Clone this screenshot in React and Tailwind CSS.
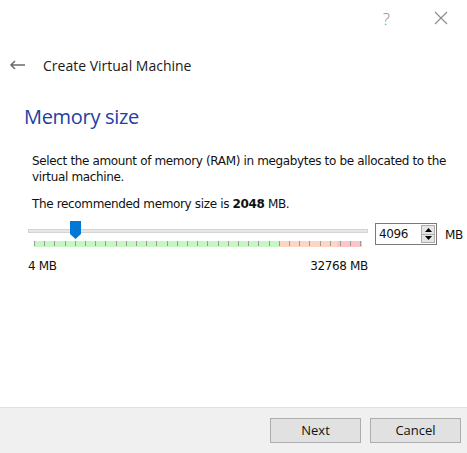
import React from "react";

// tick positions for the slider scale
const ticks = Array.from({ length: 33 }, (_, i) => i);

export default function App() {
    return (
        <div className="w-[467px] h-[453px] bg-white flex flex-col font-['Open_Sans',sans-serif] text-black overflow-hidden">
            {/* title bar */}
            <div className="h-[36px] flex items-start justify-end pt-[9px] pr-[19px] gap-[44px] text-[#8a8a8a]">
                <span className="text-[17px] leading-[20px] font-light">?</span>
                <svg width="14" height="14" viewBox="0 0 14 14" className="mt-[2px]">
                    <path d="M1 1L13 13M13 1L1 13" stroke="#8a8a8a" strokeWidth="1.1" />
                </svg>
            </div>

            {/* header */}
            <div className="h-[58px] flex items-center pl-[9px]">
                <svg width="17" height="10" viewBox="0 0 17 10">
                    <path d="M16 5H2M6 1L2 5L6 9" stroke="#6a6a6a" strokeWidth="1.5" fill="none" />
                </svg>
                <span className="ml-[17px] text-[14px] text-[#1a1a1a] pt-[1px]">Create Virtual Machine</span>
            </div>

            {/* page title */}
            <div className="pl-[24px] pt-[9px] h-[49px] text-[20px] font-normal text-[#2041a3] leading-[28px] tracking-[-0.3px]">Memory size</div>

            {/* description */}
            <div className="mt-[10px] pl-[32px] pr-[10px] font-['DejaVu_Sans',sans-serif] text-[12px] leading-[16px] tracking-[-0.35px] text-[#111]">
                <p>Select the amount of memory (RAM) in megabytes to be allocated to the virtual machine.</p>
                <p className="mt-[11px]">
                    The recommended memory size is <b>2048</b> MB.
                </p>
            </div>

            {/* slider row */}
            <div className="flex items-start mt-[9px] pl-[28px]">
                <div className="w-[340px] flex flex-col">
                    <div className="relative h-[18px]">
                        <div className="absolute left-0 right-0 top-[8px] h-[4px] bg-[#e7e7e7] border border-[#d4d4d4]" />
                        <svg width="11" height="18" viewBox="0 0 11 18" className="absolute left-[42px] top-0">
                            <path d="M0 0H11V13L5.5 18L0 13Z" fill="#0078d7" />
                        </svg>
                    </div>
                    <div className="ml-[6px] mr-[6px] mt-[2px] h-[6px] flex">
                        <div className="w-[245px] bg-[#c6f7c2]" />
                        <div className="w-[58px] bg-[#fdd5c2]" />
                        <div className="w-[25px] bg-[#fdc5c8]" />
                    </div>
                    <div className="relative -mt-[6px] ml-[6px] h-[6px]">
                        {ticks.map((i) => (
                            <div
                                key={i}
                                className="absolute top-0 w-px h-[5px] bg-[#9a9a9a]"
                                style={{ left: i * 10.2 }}
                            />
                        ))}
                    </div>
                    <div className="flex justify-between mt-[10px] font-['DejaVu_Sans',sans-serif] text-[12px] tracking-[-0.35px] text-[#111]">
                        <span>4 MB</span>
                        <span>32768 MB</span>
                    </div>
                </div>

                <div className="ml-[7px] mt-[2px] w-[62px] h-[22px] border border-[#7a7a7a] flex items-center">
                    <span className="pl-[3px] flex-1 font-['DejaVu_Sans',sans-serif] text-[12px] tracking-[-0.35px] text-[#111]">4096</span>
                    <div className="w-[14px] h-[18px] mr-[1px] flex flex-col border border-[#adadad] bg-[#e5e5e5]">
                        <div className="flex-1 flex items-center justify-center border-b border-[#adadad]">
                            <svg width="7" height="4" viewBox="0 0 7 4"><path d="M3.5 0L7 4H0Z" fill="#000" /></svg>
                        </div>
                        <div className="flex-1 flex items-center justify-center">
                            <svg width="7" height="4" viewBox="0 0 7 4"><path d="M0 0H7L3.5 4Z" fill="#000" /></svg>
                        </div>
                    </div>
                </div>
                <span className="ml-[8px] mt-[5px] font-['DejaVu_Sans',sans-serif] text-[12px] tracking-[-0.35px] text-[#111]">MB</span>
            </div>

            <div className="flex-1" />

            {/* footer */}
            <div className="h-[46px] bg-[#f0f0f0] border-t border-[#dfdfdf] flex items-start justify-end gap-[9px] pr-[6px] pt-[10px]">
                <button className="w-[91px] h-[25px] bg-[#e1e1e1] border border-[#adadad] text-[13px] text-[#111]">Next</button>
                <button className="w-[91px] h-[25px] bg-[#e1e1e1] border border-[#adadad] text-[13px] text-[#111]">Cancel</button>
            </div>
        </div>
    );
}
